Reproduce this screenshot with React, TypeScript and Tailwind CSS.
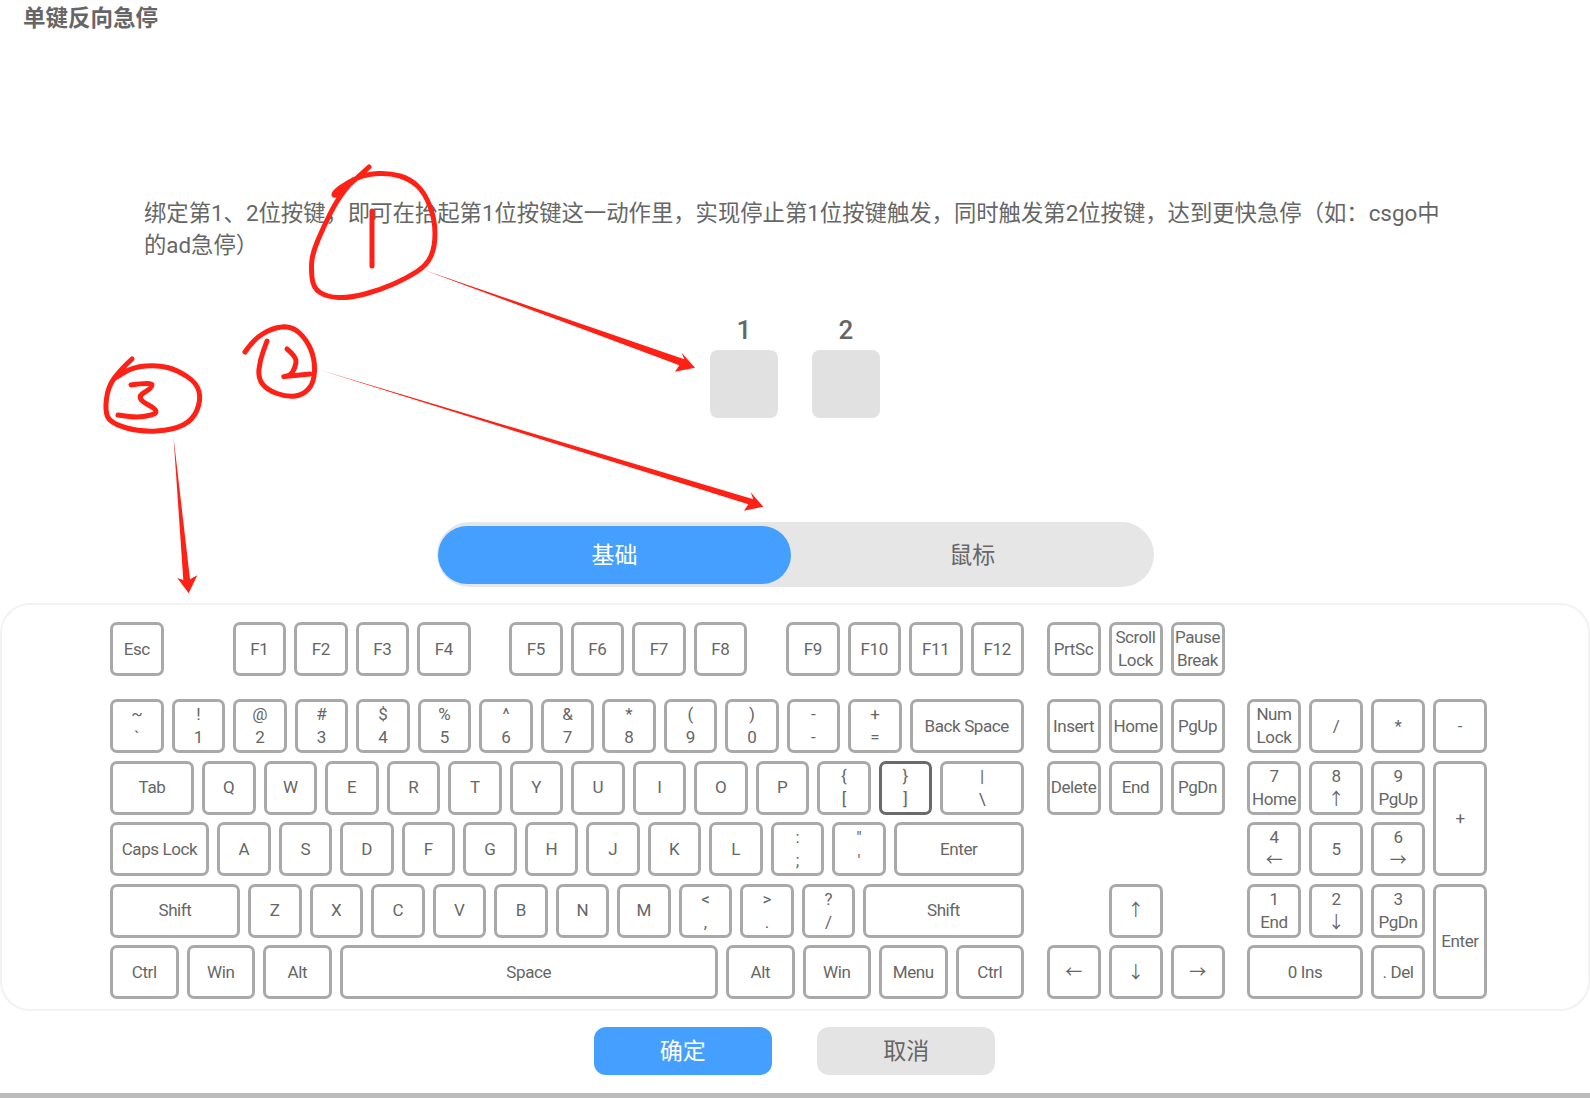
import { ReactNode } from "react";

type P = [number, number];

const description =
  "绑定第1、2位按键\uFF0C即可在抬起第1位按键这一动作里\uFF0C实现停止第1位按键触发\uFF0C同时触发第2位按键\uFF0C达到更快急停\uFF08如\uFF1Acsgo中的ad急停\uFF09";

// hand-drawn marks, real page coordinates
const circle1: P[] = [[369,167],[357,178],[335,197],[333,193],[348,182],[367,174],[390,173],[410,179],[425,193],[435,220],[435,247],[427,265],[407,278],[380,290],[350,298],[327,297],[313,288],[311,267],[313,252],[323,228],[337,200],[353,180]];
const circle2: P[] = [[245,352],[253,340],[272,328],[292,326],[307,340],[315,360],[314,383],[303,395],[287,397],[267,390],[258,378],[260,360],[267,341]];
const two: P[] = [[287,349],[297,357],[295,368],[290,376],[280,377],[310,374]];
const circle3: P[] = [[132,359],[120,370],[108,387],[105,410],[110,423],[140,432],[173,430],[193,420],[201,400],[197,383],[177,370],[158,365],[133,367],[115,378]];
const three: P[] = [[131,385],[152,382],[152,388],[135,398],[162,412],[140,418],[118,415]];

function smooth(pts: P[]) {
  let d = `M${pts[0][0]} ${pts[0][1]}`;
  for (let i = 1; i < pts.length - 1; i++) {
    const mx = (pts[i][0] + pts[i + 1][0]) / 2;
    const my = (pts[i][1] + pts[i + 1][1]) / 2;
    d += ` Q${pts[i][0]} ${pts[i][1]} ${mx} ${my}`;
  }
  const last = pts[pts.length - 1];
  return d + ` L${last[0]} ${last[1]}`;
}

function Marks() {
  return (
    <svg className="absolute left-0 top-0 z-10 pointer-events-none" width="1590" height="1098" viewBox="0 0 1590 1098" fill="none">
      <g stroke="#ff2115" strokeWidth="5" strokeLinecap="round" strokeLinejoin="round">
        <path d={smooth(circle1)} />
        <path d="M372 211V266" />
        <path d={smooth(circle2)} />
        <path d={smooth(two)} />
        <path d={smooth(circle3)} />
        <path d={smooth(three)} />
      </g>
      <g fill="#ff2115">
        <polygon points="424,270 684.3,359.3 681.7,352.7 695,367.7 675,371.7 679.3,365.3" />
        <polygon points="320,370 753.3,499.3 750.7,492.3 763.3,506.7 744,510.7 748.3,504.3" />
        <polygon points="173.5,437 190,579.3 197.3,575.3 188.7,593.3 177.3,578 183.3,580" />
      </g>
    </svg>
  );
}

function Key({ lines, className = "", active = false }: { lines: string[]; className?: string; active?: boolean }) {
  return (
    <div
      className={`h-full min-h-[54px] shrink-0 flex flex-col items-center justify-center rounded-[7px] border-[3px] bg-white text-[17px] leading-[23px] tracking-[-0.4px] whitespace-nowrap text-[#666666] ${active ? "border-[#6a6a6a]" : "border-[#a9a9a9]"} ${className}`}
    >
      {lines.map((l, i) => (
        <span key={i}>{l}</span>
      ))}
    </div>
  );
}

function Row({ children }: { children: ReactNode }) {
  return <div className="flex gap-[8px] h-[54px]">{children}</div>;
}

const U = "w-[53.5px]";

const numberRow = [["~", "`"], ["!", "1"], ["@", "2"], ["#", "3"], ["$", "4"], ["%", "5"], ["^", "6"], ["&", "7"], ["*", "8"], ["(", "9"], [")", "0"], ["-", "-"], ["+", "="]];
const qwerty = ["Q", "W", "E", "R", "T", "Y", "U", "I", "O", "P"];
const asdf = ["A", "S", "D", "F", "G", "H", "J", "K", "L"];
const zxcv = ["Z", "X", "C", "V", "B", "N", "M"];

function MainBlock() {
  return (
    <div className="w-[914px] shrink-0 flex flex-col">
      <div className="flex h-[54px]">
        <Key lines={["Esc"]} className={U} />
        <div className="flex gap-[8px] ml-[69px]">
          {["F1", "F2", "F3", "F4"].map((k) => <Key key={k} lines={[k]} className={U} />)}
        </div>
        <div className="flex gap-[8px] ml-[38.5px]">
          {["F5", "F6", "F7", "F8"].map((k) => <Key key={k} lines={[k]} className={U} />)}
        </div>
        <div className="flex gap-[8px] ml-[39px]">
          {["F9", "F10", "F11", "F12"].map((k) => <Key key={k} lines={[k]} className={U} />)}
        </div>
      </div>
      <div className="flex flex-col gap-[7.5px] mt-[23px]">
        <Row>
          {numberRow.map((k) => <Key key={k[0]} lines={k} className={U} />)}
          <Key lines={["Back Space"]} className="flex-1" />
        </Row>
        <Row>
          <Key lines={["Tab"]} className="w-[84px]" />
          {qwerty.map((k) => <Key key={k} lines={[k]} className={U} />)}
          <Key lines={["{", "["]} className={U} />
          <Key lines={["}", "]"]} className={U} active />
          <Key lines={["|", "\\"]} className="flex-1" />
        </Row>
        <Row>
          <Key lines={["Caps Lock"]} className="w-[99px]" />
          {asdf.map((k) => <Key key={k} lines={[k]} className={U} />)}
          <Key lines={[":", ";"]} className={U} />
          <Key lines={['"', "'"]} className={U} />
          <Key lines={["Enter"]} className="flex-1" />
        </Row>
        <Row>
          <Key lines={["Shift"]} className="w-[130px]" />
          {zxcv.map((k) => <Key key={k} lines={[k]} className={U} />)}
          <Key lines={["<", ","]} className={U} />
          <Key lines={[">", "."]} className={U} />
          <Key lines={["?", "/"]} className={U} />
          <Key lines={["Shift"]} className="flex-1" />
        </Row>
        <Row>
          <Key lines={["Ctrl"]} className="w-[68.5px]" />
          <Key lines={["Win"]} className="w-[68.5px]" />
          <Key lines={["Alt"]} className="w-[68.5px]" />
          <Key lines={["Space"]} className="flex-1" />
          <Key lines={["Alt"]} className="w-[68.5px]" />
          <Key lines={["Win"]} className="w-[68.5px]" />
          <Key lines={["Menu"]} className="w-[68.5px]" />
          <Key lines={["Ctrl"]} className="w-[68.5px]" />
        </Row>
      </div>
    </div>
  );
}

function NavBlock() {
  return (
    <div className="w-[178px] shrink-0 flex flex-col">
      <div className="grid grid-cols-3 gap-x-[8px] h-[54px]">
        <Key lines={["PrtSc"]} />
        <Key lines={["Scroll", "Lock"]} />
        <Key lines={["Pause", "Break"]} />
      </div>
      <div className="grid grid-cols-3 grid-rows-[repeat(5,54px)] gap-x-[8px] gap-y-[7.5px] mt-[23px]">
        <Key lines={["Insert"]} />
        <Key lines={["Home"]} />
        <Key lines={["PgUp"]} />
        <Key lines={["Delete"]} />
        <Key lines={["End"]} />
        <Key lines={["PgDn"]} />
        <Key lines={["↑"]} className="col-start-2 row-start-4" />
        <Key lines={["←"]} className="col-start-1 row-start-5" />
        <Key lines={["↓"]} className="col-start-2 row-start-5" />
        <Key lines={["→"]} className="col-start-3 row-start-5" />
      </div>
    </div>
  );
}

function NumPad() {
  return (
    <div className="w-[240px] shrink-0 mt-[77px] grid grid-cols-4 grid-rows-[repeat(5,54px)] gap-x-[8px] gap-y-[7.5px]">
      <Key lines={["Num", "Lock"]} />
      <Key lines={["/"]} />
      <Key lines={["*"]} />
      <Key lines={["-"]} />
      <Key lines={["7", "Home"]} />
      <Key lines={["8", "↑"]} />
      <Key lines={["9", "PgUp"]} />
      <Key lines={["+"]} className="row-span-2" />
      <Key lines={["4", "←"]} />
      <Key lines={["5"]} />
      <Key lines={["6", "→"]} />
      <Key lines={["1", "End"]} />
      <Key lines={["2", "↓"]} />
      <Key lines={["3", "PgDn"]} />
      <Key lines={["Enter"]} className="row-span-2" />
      <Key lines={["0 Ins"]} className="col-span-2" />
      <Key lines={[". Del"]} />
    </div>
  );
}

export default function App() {
  return (
    <div className="relative w-[1590px] h-[1098px] overflow-hidden bg-white text-[#666666] font-[family-name:Roboto,'Noto_Sans_CJK_SC',sans-serif]">
      <h1 className="h-[36px] pl-[23px] text-[22.5px] leading-[36px] font-bold">单键反向急停</h1>

      <p className="mt-[161px] ml-[144px] w-[1310px] text-[22.35px] leading-[32px]">{description}</p>

      {/* key slots */}
      <div className="mt-[53px] flex justify-center gap-[34px]">
        {["1", "2"].map((n) => (
          <div key={n} className="w-[68px] flex flex-col items-center">
            <span className="h-[36px] text-[26px] leading-[32px] font-medium">{n}</span>
            <div className="w-[68px] h-[68px] rounded-[8px] bg-[#e1e1e1]" />
          </div>
        ))}
      </div>

      {/* tabs */}
      <div className="mt-[104px] mx-auto w-[717px] h-[65px] rounded-full bg-[#e6e6e6] flex items-center pl-[1.5px] text-[23px]">
        <div className="w-[353px] h-[58px] pt-[3px] rounded-full bg-[#459ffe] text-white flex items-center justify-center">基础</div>
        <div className="flex-1 pt-[3px] text-center">鼠标</div>
      </div>

      {/* keyboard */}
      <div className="mt-[16px] h-[408px] rounded-[30px] border-2 border-[#f2f2f2] pt-[17px] pl-[108px] flex gap-[22.5px]">
        <MainBlock />
        <NavBlock />
        <NumPad />
      </div>

      <div className="mt-[16px] pr-[1px] flex justify-center gap-[45.5px] text-[23px]">
        <button className="w-[178px] h-[48px] pt-[3px] rounded-[12px] bg-[#459ffe] text-white">确定</button>
        <button className="w-[178px] h-[48px] pt-[3px] rounded-[12px] bg-[#e4e4e4] text-[#666666]">取消</button>
      </div>

      <div className="mt-[18px] h-[5px] bg-[#bcbcbc]" />

      <Marks />
    </div>
  );
}
